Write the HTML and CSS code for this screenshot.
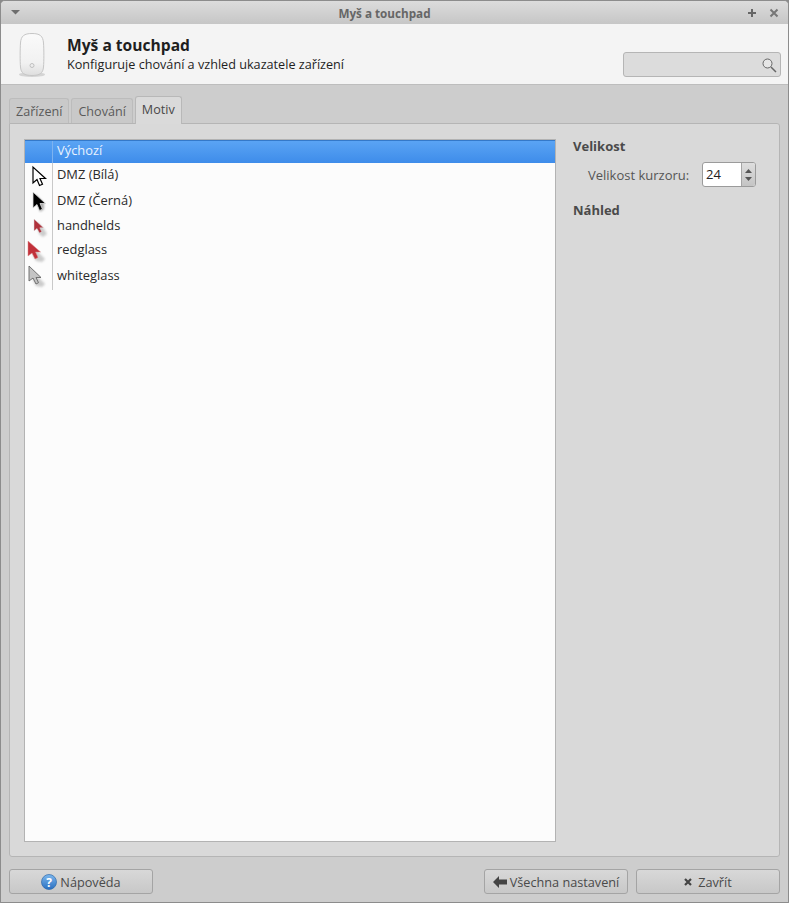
FILE: index.html
```html
<!DOCTYPE html>
<html lang="cs">
<head>
<meta charset="utf-8">
<title>Myš a touchpad</title>
<link rel="stylesheet" href="styles.css">
</head>
<body>
<div class="window">
  <div class="titlebar">
    <svg class="menu-arrow" width="10" height="5" viewBox="0 0 10 5"><path d="M0 0h9L4.500 4.500z" fill="#6e6e6e"/></svg>
    <div class="title">Myš a touchpad</div>
    <svg class="wm-icon" width="10" height="10" viewBox="0 0 10 10"><path d="M5 1v8M1 5h8" stroke="#666" stroke-width="2"/></svg>
    <svg class="wm-icon wm-close" width="10" height="10" viewBox="0 0 10 10"><path d="M1.500 1.500l7 7M8.500 1.500l-7 7" stroke="#777" stroke-width="2"/></svg>
  </div>
  <header class="header">
    <svg class="mouse" width="28" height="46" viewBox="0 0 28 46">
      <defs>
        <linearGradient id="mg" x1="0" y1="0" x2="0" y2="1"><stop offset="0" stop-color="#fafafa"/><stop offset="0.7" stop-color="#f1f1f1"/><stop offset="1" stop-color="#dedede"/></linearGradient>
      </defs>
      <ellipse cx="14" cy="42.500" rx="13" ry="2.500" fill="#d4d4d4"/>
      <path d="M14 1.500C6 1.500 3 4 2.500 11 2 18 2 29 2.500 35 3 41 6 43.500 14 43.500S25 41 25.500 35C26 29 26 18 25.500 11 25 4 22 1.500 14 1.500z" fill="url(#mg)" stroke="#c6c6c6"/>
      <circle cx="14" cy="33.500" r="2" fill="none" stroke="#c0c0c0"/>
    </svg>
    <div class="heading">
      <div class="h-title">Myš a touchpad</div>
      <div class="h-sub">Konfiguruje chování a vzhled ukazatele zařízení</div>
    </div>
    <div class="search">
      <svg width="16" height="16" viewBox="0 0 16 16"><circle cx="6.500" cy="6.500" r="4.500" fill="#f0f0f0" fill-opacity=".5" stroke="#666"/><path d="M10 10l5 5" stroke="#666" stroke-width="1.500"/></svg>
    </div>
  </header>
  <main class="content">
    <nav class="tabs">
      <div class="tab">Zařízení</div>
      <div class="tab">Chování</div>
      <div class="tab active">Motiv</div>
    </nav>
    <section class="notebook">
      <div class="list">
        <div class="row selected"><div class="cell-icon"></div><div class="cell-name">Výchozí</div></div>
        <div class="row h25"><div class="cell-icon">
          <svg width="18" height="24" viewBox="0 0 18 24"><path d="M3 3v16l4-3.500 2.500 6 3-1.300-2.500-5.700h5.500z" fill="#fff" stroke="#000" stroke-width="1.200"/></svg>
        </div><div class="cell-name">DMZ (Bílá)</div></div>
        <div class="row h26"><div class="cell-icon">
          <svg width="18" height="24" viewBox="0 0 18 24"><path class="shadow" d="M5 5l9 9v6l-4 3z" fill="#aaa"/><path d="M3 3v16l4-3.500 2.500 6 3-1.300-2.500-5.700h5.500z" fill="#000" stroke="#ddd" stroke-width=".8"/></svg>
        </div><div class="cell-name">DMZ (Černá)</div></div>
        <div class="row h25"><div class="cell-icon">
          <svg class="small" width="18" height="22" viewBox="0 0 18 22"><path class="shadow" d="M6 6l7 7 3 5-4 3-4-3z" fill="#ccc"/><path d="M3 3v12l3-2.500 2.500 4.500 2.300-1.200-2-4h3.700z" fill="#b0323c" stroke="#ddd" stroke-width=".5"/></svg>
        </div><div class="cell-name">handhelds</div></div>
        <div class="row h23"><div class="cell-icon">
          <svg class="wide" width="20" height="24" viewBox="0 0 20 24"><path class="shadow" d="M5 6l9 9 5 5-3 3-6-1-3-6z" fill="#ccc"/><path d="M2 2v15l4-3 3 6 3-1.500-2.500-5.500h5z" fill="#c1303a" stroke="#d88" stroke-width=".5"/></svg>
        </div><div class="cell-name">redglass</div></div>
        <div class="row h28"><div class="cell-icon">
          <svg class="wide" width="20" height="24" viewBox="0 0 20 24"><path class="shadow" d="M5 6l9 9 5 5-3 3-6-1-3-6z" fill="#ccc"/><path d="M3 2v15l4-3 3 6 2.500-1.300-2.500-5.200h5z" fill="#c4c4c4" stroke="#666" stroke-width=".9"/></svg>
        </div><div class="cell-name">whiteglass</div></div>
      </div>
      <aside class="side">
        <div class="side-head">Velikost</div>
        <div class="size-row">
          <span class="size-label">Velikost kurzoru:</span>
          <div class="spin">
            <div class="spin-value">24</div>
            <div class="spin-btns">
              <svg width="7" height="4" viewBox="0 0 7 4"><path d="M0 4h7L3.500 0z" fill="#555"/></svg>
              <svg width="7" height="4" viewBox="0 0 7 4"><path d="M0 0h7L3.500 4z" fill="#555"/></svg>
            </div>
          </div>
        </div>
        <div class="side-head preview">Náhled</div>
      </aside>
    </section>
    <footer class="buttons">
      <button class="btn">
        <svg width="16" height="16" viewBox="0 0 16 16"><defs><linearGradient id="hg" x1="0" y1="0" x2="0" y2="1"><stop offset="0" stop-color="#7db8ee"/><stop offset="1" stop-color="#2a6fc0"/></linearGradient></defs><circle cx="8" cy="8" r="7.500" fill="url(#hg)" stroke="#2c69ac" stroke-width=".7"/><text x="8" y="12.500" text-anchor="middle" class="help-q">?</text></svg>
        <span>Nápověda</span>
      </button>
      <div class="spacer"></div>
      <button class="btn">
        <svg width="14" height="12" viewBox="0 0 14 12"><path d="M0 6l6-6v3.500h8v5H6V12z" fill="#444"/></svg>
        <span>Všechna nastavení</span>
      </button>
      <button class="btn close">
        <svg width="8" height="8" viewBox="0 0 8 8"><path d="M1 1l6 6M7 1L1 7" stroke="#444" stroke-width="2.200"/></svg>
        <span>Zavřít</span>
      </button>
    </footer>
  </main>
</div>
</body>
</html>
```
FILE: styles.css
```css
* { box-sizing: border-box; }
html, body { margin: 0; padding: 0; height: 100%; background: #8a8a8a; }
body { font-family: "Open Sans", "Noto Sans", sans-serif; font-size: 13px; color: #4a4a4a; overflow: hidden; }
.window { width: 789px; height: 903px; display: flex; flex-direction: column; background: #cdcdcd; border: 1px solid #8c8c8c; border-radius: 5px 5px 0 0; overflow: hidden; }
.titlebar { height: 23px; flex: none; display: flex; align-items: center; padding: 0 9px 0 10px; background: linear-gradient(#dcdcdc, #c6c6c6); gap: 12px; }
.title { flex: 1; text-align: center; font-size: 11.700px; font-weight: 700; color: #666; padding-left: 1px; }
.menu-arrow { flex: none; }
.wm-icon { flex: none; }
.header { height: 61px; flex: none; display: flex; align-items: center; background: #f4f4f4; border-bottom: 1px solid #bdbdbd; padding: 0 7px 0 17px; }
.mouse { flex: none; margin-right: 21px; margin-top: 1px; }
.heading { flex: 1; color: #1f1f1f; margin-top: -2px; }
.h-title { font-size: 15.600px; font-weight: 700; line-height: 21px; }
.h-sub { font-size: 12.650px; font-weight: 500; line-height: 16px; color: #1f1f1f; }
.search { width: 158px; height: 25px; align-self: flex-end; margin-bottom: 7px; background: #dcdcdc; border: 1px solid #b5b5b5; border-radius: 3px; display: flex; align-items: center; justify-content: flex-end; padding-right: 3px; }
.content { flex: 1; display: flex; flex-direction: column; padding: 11px 8px 0; min-height: 0; }
.tabs { display: flex; gap: 2px; height: 27px; flex: none; align-items: flex-end; position: relative; z-index: 1; }
.tab { height: 25px; padding: 0 6px; line-height: 26px; font-size: 12.600px; color: #5a5a5a; background: #c9c9c9; border: 1px solid #bcbcbc; border-bottom: none; border-radius: 3px 3px 0 0; }
.tab.active { height: 28px; line-height: 26px; background: #dadada; color: #484848; margin-bottom: -1px; border-color: #b8b8b8; }
.notebook { height: 734px; flex: none; display: flex; background: #d9d9d9; border: 1px solid #b5b5b5; border-radius: 0 3px 3px 3px; padding: 15px 23px 14px 14px; }
.list { width: 532px; height: 703px; flex: none; background: #fcfcfc; border: 1px solid #b3b3b3; font-size: 12.900px; color: #2a2a2a; }
.row { display: flex; align-items: stretch; }
.row.selected { height: 23px; background: linear-gradient(#5aa4f4, #3e8cea); color: #e8f2ff; border-top: 1px solid #3479c9; }
.h23 { height: 23px; }
.h25 { height: 25px; }
.h26 { height: 26px; }
.h28 { height: 28px; }
.cell-icon { width: 28px; flex: none; border-right: 1px solid #c9c9c9; display: flex; align-items: center; justify-content: center; overflow: visible; }
.selected .cell-icon { border-right-color: #7db3f0; }
.wide { margin-left: -6px; overflow: visible; }
.small { margin-left: 2px; overflow: visible; }
.shadow { filter: blur(1px); }
.cell-name { padding-left: 4px; padding-bottom: 3px; display: flex; align-items: center; }
.selected .cell-name { padding-bottom: 4px; }
.side { flex: 1; padding-left: 17px; }
.side-head { font-weight: 700; font-size: 13px; color: #4a4a4a; line-height: 18px; margin-top: -2px; }
.size-row { display: flex; align-items: center; margin-top: 7px; padding-left: 15px; }
.size-label { width: 114px; flex: none; color: #555; }
.spin { width: 54px; height: 25px; flex: none; display: flex; background: #fff; border: 1px solid #9b9b9b; border-radius: 3px; overflow: hidden; }
.spin-value { flex: 1; padding-left: 3px; line-height: 23px; color: #222; }
.spin-btns { width: 14px; flex: none; display: flex; flex-direction: column; align-items: center; justify-content: center; gap: 4px; background: linear-gradient(#dedede, #c4c4c4); border-left: 1px solid #a5a5a5; }
.preview { margin-top: 14px; }
.buttons { display: flex; gap: 8px; padding-top: 12px; flex: none; }
.spacer { flex: 1; }
.btn { width: 144px; height: 25px; display: flex; align-items: center; justify-content: center; gap: 3px; padding: 0; font: inherit; font-size: 12.700px; color: #4a4a4a; background: linear-gradient(#d8d8d8, #c8c8c8); border: 1px solid #a4a4a4; border-radius: 3px; }
.close { gap: 6px; }
.help-q { font-family: "Open Sans", sans-serif; font-size: 12px; font-weight: 700; fill: #fff; }
```
